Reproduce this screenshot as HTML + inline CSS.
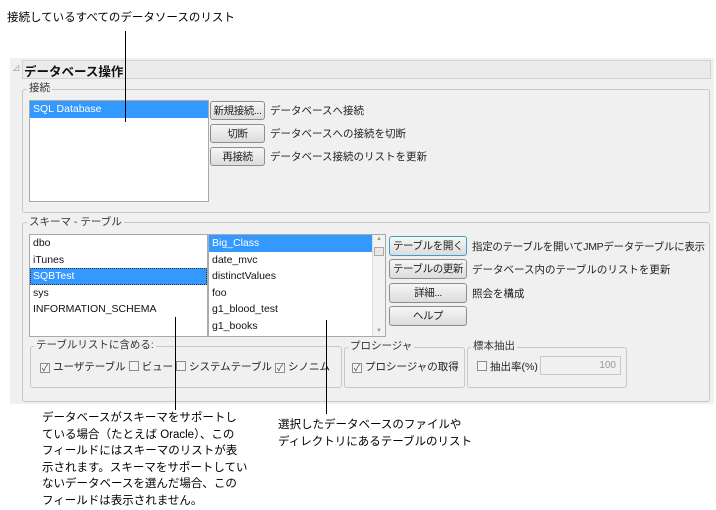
<!DOCTYPE html>
<html><head><meta charset="utf-8"><style>
*{margin:0;padding:0;box-sizing:border-box}
body{width:716px;height:509px;background:#fff;position:relative;overflow:hidden;font-family:"Liberation Sans","Noto Sans CJK JP",sans-serif;font-size:10.5px;color:#222}
.a{position:absolute;white-space:nowrap}
.grp{position:absolute;border:1px solid #c8c8c8;border-radius:3px}
.lg{position:absolute;background:#f0f0f0;padding:0 2px;line-height:12px;font-size:10.5px;color:#333}
.list{position:absolute;background:#fff;border:1px solid #a9a9a9}
.row{height:16.5px;line-height:16.5px;padding-left:3px;font-size:10.5px;color:#111}
.sel{background:#3399ff;color:#fff}
.btn{position:absolute;border:1px solid #8e8e8e;border-radius:3px;background:linear-gradient(#f6f6f6,#dcdcdc);text-align:center;line-height:18px;font-size:10.5px;color:#222;white-space:nowrap;overflow:hidden;letter-spacing:-0.4px}
.cb{display:inline-block;width:10px;height:10px;border:1px solid #8e8e8e;background:#f4f4f4;vertical-align:-1px;margin-right:3px;position:relative;font-size:9px;line-height:8px;text-align:center;color:#333080}
.ln{position:absolute;background:#000;width:1px}
.t{font-size:11.5px;color:#000}
</style></head><body>
<div class="a t" style="left:7px;top:9px;font-size:11.5px">接続しているすべてのデータソースのリスト</div>
<div style="position:absolute;left:10px;top:58px;width:704px;height:346px;background:#f0f0f0"></div>
<div style="position:absolute;left:22px;top:60px;width:689px;height:19px;background:#ebebeb;border:1px solid #d2d2d2"></div>
<div class="a" style="left:13px;top:63px;font-size:8px;color:#888">◿</div>
<div class="a" style="left:24px;top:61px;font-size:12.5px;font-weight:bold;color:#111">データベース操作</div>

<div class="grp" style="left:22px;top:89px;width:688px;height:124px"></div>
<div class="lg" style="left:27px;top:82px">接続</div>
<div class="list" style="left:29px;top:100px;width:180px;height:102px"><div class="row sel">SQL Database</div></div>
<div class="btn" style="left:210px;top:101px;width:55px;height:19px">新規接続...</div>
<div class="btn" style="left:210px;top:124px;width:55px;height:19px">切断</div>
<div class="btn" style="left:210px;top:147px;width:55px;height:19px">再接続</div>
<div class="a" style="left:270px;top:103px">データベースへ接続</div>
<div class="a" style="left:270px;top:126px">データベースへの接続を切断</div>
<div class="a" style="left:270px;top:149px">データベース接続のリストを更新</div>

<div class="grp" style="left:22px;top:222px;width:688px;height:180px"></div>
<div class="lg" style="left:27px;top:216px">スキーマ - テーブル</div>
<div class="list" style="left:29px;top:234px;width:179px;height:103px">
<div class="row">dbo</div><div class="row">iTunes</div><div class="row sel" style="outline:1px dotted #333;outline-offset:-1px">SQBTest</div><div class="row">sys</div><div class="row">INFORMATION_SCHEMA</div></div>
<div class="list" style="left:208px;top:234px;width:178px;height:103px">
<div class="row sel" style="margin-right:13px">Big_Class</div><div class="row">date_mvc</div><div class="row">distinctValues</div><div class="row">foo</div><div class="row">g1_blood_test</div><div class="row">g1_books</div>
<div style="position:absolute;right:0;top:0;width:13px;height:101px;background:#f2f2f2;border-left:1px solid #ddd"><div style="position:absolute;left:1px;top:12px;width:10px;height:9px;border:1px solid #aaa;background:#e8e8e8"></div><div style="position:absolute;left:3px;top:1px;font-size:6px;color:#999">▲</div><div style="position:absolute;left:3px;bottom:2px;font-size:6px;color:#999">▼</div></div></div>
<div class="btn" style="left:389px;top:236px;width:78px;height:20px;border-color:#3c9fc4">テーブルを開く</div>
<div class="btn" style="left:389px;top:259px;width:78px;height:20px">テーブルの更新</div>
<div class="btn" style="left:389px;top:283px;width:78px;height:20px">詳細...</div>
<div class="btn" style="left:389px;top:306px;width:78px;height:20px">ヘルプ</div>
<div class="a" style="left:472px;top:239px;letter-spacing:-0.3px">指定のテーブルを開いてJMPデータテーブルに表示</div>
<div class="a" style="left:472px;top:262px">データベース内のテーブルのリストを更新</div>
<div class="a" style="left:472px;top:286px">照会を構成</div>

<div class="grp" style="left:30px;top:346px;width:312px;height:42px"></div>
<div class="lg" style="left:34px;top:339px">テーブルリストに含める:</div>
<div class="a" style="left:40px;top:359px"><span class="cb">✓</span>ユーザテーブル <span class="cb"></span>ビュー <span class="cb"></span>システムテーブル <span class="cb">✓</span>シノニム</div>
<div class="grp" style="left:344px;top:347px;width:121px;height:41px"></div>
<div class="lg" style="left:348px;top:340px">プロシージャ</div>
<div class="a" style="left:352px;top:359px"><span class="cb">✓</span>プロシージャの取得</div>
<div class="grp" style="left:467px;top:347px;width:160px;height:41px"></div>
<div class="lg" style="left:471px;top:340px">標本抽出</div>
<div class="a" style="left:477px;top:359px"><span class="cb"></span>抽出率(%)</div>
<div style="position:absolute;left:540px;top:356px;width:81px;height:19px;border:1px solid #c8c8c8;background:#f0f0f0;text-align:right;padding-right:4px;line-height:17px;color:#999;font-size:10px">100</div>

<div class="ln" style="left:125px;top:31px;height:91px"></div>
<div class="ln" style="left:175px;top:317px;height:93px"></div>
<div class="ln" style="left:326px;top:320px;height:94px"></div>
<div class="a t" style="left:42px;top:410px;line-height:16.6px;font-size:11.5px">データベースがスキーマをサポートし<br>ている場合（たとえば Oracle）、この<br>フィールドにはスキーマのリストが表<br>示されます。スキーマをサポートしてい<br>ないデータベースを選んだ場合、この<br>フィールドは表示されません。</div>
<div class="a t" style="left:278px;top:417px;line-height:17px">選択したデータベースのファイルや<br>ディレクトリにあるテーブルのリスト</div>
</body></html>
